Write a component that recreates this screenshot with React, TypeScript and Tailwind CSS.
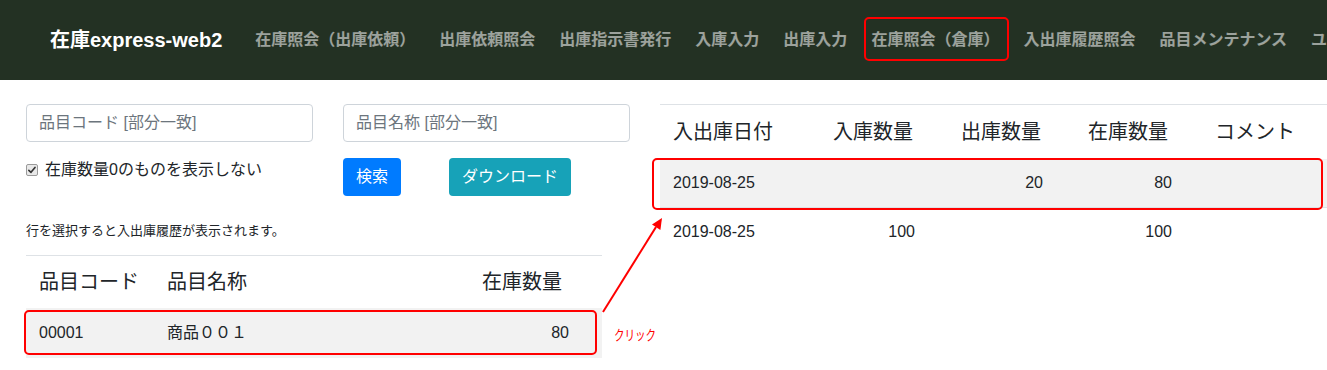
const navItems = [
  '在庫照会（出庫依頼）',
  '出庫依頼照会',
  '出庫指示書発行',
  '入庫入力',
  '出庫入力',
  '在庫照会（倉庫）',
  '入出庫履歴照会',
  '品目メンテナンス',
  'ユーザーメンテナンス',
]

const history = [
  { date: '2019-08-25', inQty: '', outQty: '20', stock: '80', selected: true },
  { date: '2019-08-25', inQty: '100', outQty: '', stock: '100', selected: false },
]

function CheckMark() {
  return (
    <span className="mr-[7px] flex h-[12px] w-[12px] items-center justify-center rounded-[2px] border border-[#9a9a9a] bg-[#e9e9e9]">
      <svg viewBox="0 0 12 12" className="h-[10px] w-[10px]">
        <path d="M2.2 6.4 L4.8 8.8 L9.6 3" fill="none" stroke="#333" strokeWidth="2" strokeLinecap="round" strokeLinejoin="round" />
      </svg>
    </span>
  )
}

export default function App() {
  return (
    <div className="relative min-h-[370px] overflow-hidden bg-white font-['Liberation_Sans','Noto_Sans_CJK_JP',sans-serif] text-[#212529]">
      {/* navbar */}
      <nav className="flex h-20 items-center overflow-hidden whitespace-nowrap bg-[#233123] pl-[50px]">
        <span className="mr-[21px] text-[20px] font-bold leading-6 text-white">在庫express-web2</span>
        {navItems.map((item) => (
          <span key={item} className="relative shrink-0 px-3 text-[16px] font-bold leading-6 text-white/55">
            {item}
            {item === '在庫照会（倉庫）' && (
              <span className="absolute bottom-[-9px] left-[5px] right-[2px] top-[-11px] rounded-[5px] border-2 border-[#ff0000]" />
            )}
          </span>
        ))}
      </nav>

      <div className="flex pt-6">
        {/* left: search + stock list */}
        <div className="ml-[26px] w-[604px] shrink-0">
          <div className="grid grid-cols-2 gap-x-[30px]">
            <input
              className="h-[38px] rounded border border-[#ced4da] px-3 text-[16px] placeholder-[#6c757d] outline-none"
              placeholder="品目コード [部分一致]"
            />
            <input
              className="h-[38px] rounded border border-[#ced4da] px-3 text-[16px] placeholder-[#6c757d] outline-none"
              placeholder="品目名称 [部分一致]"
            />
          </div>

          <div className="mt-4 grid grid-cols-2 gap-x-[30px]">
            <label className="flex h-6 items-center text-[16px] leading-6">
              <CheckMark />
              在庫数量0のものを表示しない
            </label>
            <div className="flex gap-[48px]">
              <button className="h-[38px] w-[58px] rounded bg-[#007bff] text-[16px] text-white">検索</button>
              <button className="h-[38px] w-[122px] rounded bg-[#17a2b8] text-[16px] text-white">ダウンロード</button>
            </div>
          </div>

          <p className="mt-[25px] text-[13px] leading-5">行を選択すると入出庫履歴が表示されます。</p>

          <div className="mt-[14px] w-[576px] border-t border-[#dee2e6]">
            <div className="grid h-[52px] grid-cols-[128px_1fr_auto] items-center text-[20px]">
              <span className="pl-[13px]">品目コード</span>
              <span className="pl-[13px]">品目名称</span>
              <span className="pr-[40px]">在庫数量</span>
            </div>
            <div className="relative grid h-[50px] grid-cols-[128px_1fr_auto] items-center bg-[#f2f2f2] text-[16px]">
              <span className="pl-[13px]">00001</span>
              <span className="pl-[13px]">商品００１</span>
              <span className="pr-[33px]">80</span>
              <span className="absolute bottom-[3px] left-[-2px] right-[5px] top-[2px] rounded-[5px] border-2 border-[#ff0000]" />
            </div>
          </div>
        </div>

        {/* right: in/out history */}
        <div className="ml-[30px] flex-1 border-t border-[#dee2e6]">
          <div className="grid h-[54px] grid-cols-[161px_128px_127px_127px_1fr] items-center text-[20px]">
            <span className="pl-[13px]">入出庫日付</span>
            <span className="pl-3">入庫数量</span>
            <span className="pl-3">出庫数量</span>
            <span className="pl-3">在庫数量</span>
            <span className="pl-3">コメント</span>
          </div>
          {history.map((row, i) => (
            <div
              key={i}
              className={
                row.selected
                  ? 'relative grid h-[49px] grid-cols-[161px_128px_127px_127px_1fr] items-center border-b border-[#dee2e6] bg-[#f2f2f2] text-[16px]'
                  : 'relative grid h-[48px] grid-cols-[161px_128px_127px_127px_1fr] items-center text-[16px]'
              }
            >
              <span className="pl-[13px]">{row.date}</span>
              <span className="pr-[34px] text-right">{row.inQty}</span>
              <span className="pr-[33px] text-right">{row.outQty}</span>
              <span className="pr-[31px] text-right">{row.stock}</span>
              <span />
              {row.selected && (
                <span className="absolute bottom-[-3px] left-[-8px] right-[4px] top-[-1px] rounded-[5px] border-2 border-[#ff0000]" />
              )}
            </div>
          ))}
        </div>
      </div>

      {/* click annotation */}
      <svg className="pointer-events-none absolute left-0 top-0 h-[370px] w-[1327px]">
        <line x1="603" y1="312" x2="656" y2="227" stroke="#ff0000" strokeWidth="2" />
        <polygon points="662,218 660.4,230 652,224.6" fill="#ff0000" />
      </svg>
      <span className="absolute left-[614px] top-[327px] origin-left scale-x-75 text-[14px] leading-4 text-[#ff0000]">クリック</span>
    </div>
  )
}
